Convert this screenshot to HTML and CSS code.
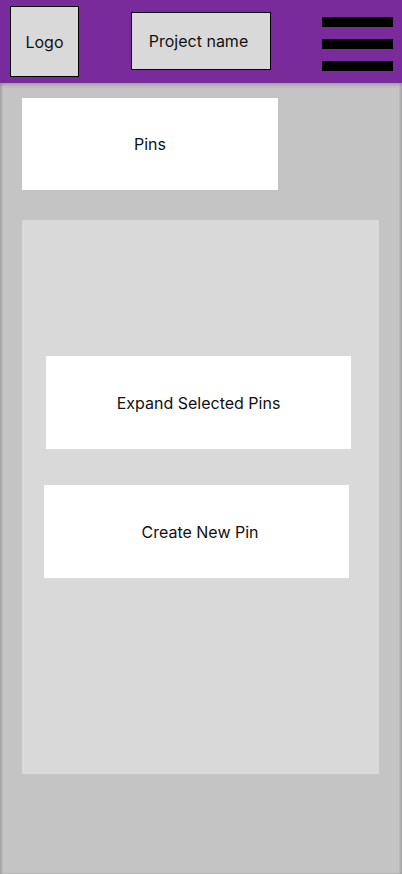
FILE: index.html
```html
<!DOCTYPE html>
<html lang="en">
<head>
<meta charset="utf-8">
<title>Pins</title>
<link rel="stylesheet" href="styles.css">
</head>
<body>
<header class="topbar">
  <div class="logo">Logo</div>
  <div class="project">Project name</div>
  <div class="menu" aria-label="Menu">
    <span class="bar"></span>
    <span class="bar"></span>
    <span class="bar"></span>
  </div>
</header>
<main class="content">
  <div class="pins-card">Pins</div>
  <section class="panel">
    <div class="action action-expand">Expand Selected Pins</div>
    <div class="action action-create">Create New Pin</div>
  </section>
</main>
</body>
</html>
```
FILE: styles.css
```css
* { box-sizing: border-box; }
html, body { margin: 0; padding: 0; }
body {
  width: 402px;
  height: 874px;
  overflow: hidden;
  font-family: Inter, "Noto Sans", "Liberation Sans", sans-serif;
  font-size: 16px;
  color: #111;
  background: #c4c4c4;
}
.topbar {
  height: 83px;
  background: #7a2b9b;
  display: flex;
  align-items: flex-start;
  padding-left: 10px;
}
.logo {
  margin-top: 6px;
  width: 69px;
  height: 71px;
  background: #d9d9d9;
  border: 1px solid #000;
  display: flex;
  align-items: center;
  justify-content: center;
}
.project {
  margin-top: 12px;
  margin-left: 52px;
  width: 140px;
  height: 58px;
  padding-right: 5px;
  background: #d9d9d9;
  border: 1px solid #000;
  display: flex;
  align-items: center;
  justify-content: center;
}
.menu {
  margin-top: 17px;
  margin-left: 51px;
  width: 71px;
  display: flex;
  flex-direction: column;
  gap: 12px;
}
.bar {
  display: block;
  height: 10px;
  background: #000;
}
.content {
  height: 791px;
  padding: 15px 23px 0 22px;
  box-shadow: inset 2px 0 2px rgba(0,0,0,0.12), inset -2px 0 2px rgba(0,0,0,0.12), inset 0 3px 3px rgba(0,0,0,0.12);
}
.pins-card {
  width: 256px;
  height: 92px;
  background: #fff;
  display: flex;
  align-items: center;
  justify-content: center;
}
.panel {
  margin-top: 30px;
  width: 357px;
  height: 554px;
  background: #d9d9d9;
  padding-top: 136px;
  display: flex;
  flex-direction: column;
  gap: 36px;
}
.action {
  width: 305px;
  height: 93px;
  background: #fff;
  display: flex;
  align-items: center;
  justify-content: center;
}
.action-expand { margin-left: 24px; }
.action-create { margin-left: 22px; padding-left: 7px; }
```
